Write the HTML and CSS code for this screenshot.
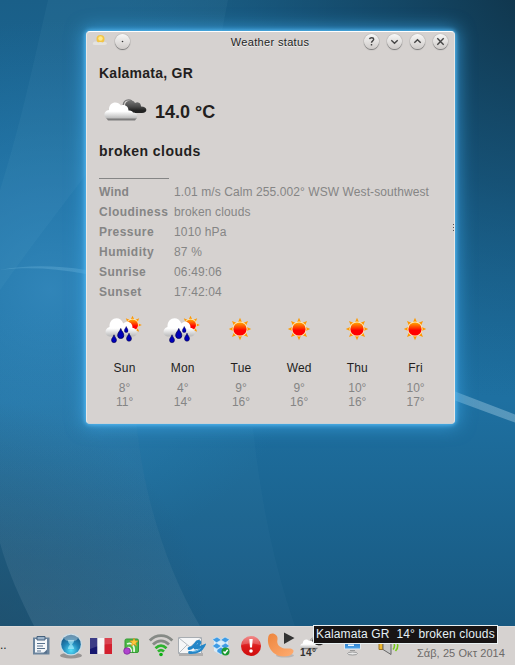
FILE: index.html
```html
<!DOCTYPE html>
<html lang="en">
<head>
<meta charset="utf-8">
<title>Weather status</title>
<link rel="stylesheet" href="styles.css">
</head>
<body>
<svg class="defs" width="0" height="0" aria-hidden="true">
  <defs>
    <linearGradient id="cloud" x1="0" y1="0" x2="0" y2="1"><stop offset=".55" stop-color="#fff"/><stop offset="1" stop-color="#b8b8b8"/></linearGradient>
    <linearGradient id="dark" x1="0" y1="0" x2="0" y2="1"><stop offset="0" stop-color="#777"/><stop offset=".5" stop-color="#484848"/><stop offset=".8" stop-color="#222"/></linearGradient>
    <linearGradient id="sunfill" x1="0" y1="0" x2="0" y2="1"><stop offset="0" stop-color="#ffa800"/><stop offset=".45" stop-color="#ff3000"/><stop offset=".6" stop-color="#ff0000"/></linearGradient>
    <radialGradient id="orb" cx=".5" cy=".8" r=".8"><stop offset="0" stop-color="#54e0fa"/><stop offset=".5" stop-color="#2186b8"/><stop offset="1" stop-color="#17517d"/></radialGradient>
    <linearGradient id="red" x1="0" y1="0" x2="0" y2="1"><stop offset="0" stop-color="#ee6a6a"/><stop offset=".5" stop-color="#dc1c1c"/><stop offset="1" stop-color="#cf0c0c"/></linearGradient>
    <linearGradient id="phone" x1="0" y1="0" x2="1" y2="1"><stop offset="0" stop-color="#ed853e"/><stop offset="1" stop-color="#ffad72"/></linearGradient>
    <linearGradient id="screen" x1="0" y1="0" x2="0" y2="1"><stop offset="0" stop-color="#175aa8"/><stop offset="1" stop-color="#4fa8f0"/></linearGradient>
    <symbol id="sun" viewBox="0 0 24 24">
      <path fill="#ff9800" d="M12 .8l2.200 5h-4.400zM12 23.200l2.200-5h-4.400zM.8 12l5-2.200v4.400zM23.200 12l-5-2.200v4.400zM4 4l5.500 2.300L6.300 9.500zM20 4l-5.500 2.300 3.200 3.200zM4 20l5.500-2.300-3.200-3.200zM20 20l-5.500-2.300 3.200-3.200z"/>
      <circle cx="12" cy="12" r="7.600" fill="#ffe9b8"/><circle cx="12" cy="12" r="6.600" fill="url(#sunfill)"/>
    </symbol>
    <symbol id="drop" viewBox="0 0 8 12"><path fill="#0000b8" stroke="#000050" stroke-width=".8" d="M4 .7C4.700 3.500 7.300 5 7.300 8a3.300 3.300 0 0 1-6.600 0C.7 5 3.300 3.500 4 .7z"/></symbol>
    <symbol id="rain" viewBox="0 0 38 32">
      <use href="#sun" x="17.500" y="0" width="20" height="20"/>
      <path fill="url(#cloud)" d="M6 21.500C-1 21.500-1 13.500 4.500 12 4 2 15.500.5 18.300 8.500c4-4 9.700-1 9.200 4.500 5.500 0 6.500 8.500 0 8.500z"/>
      <use href="#drop" x="6" y="19" width="6" height="9.500"/><use href="#drop" x="12" y="12.500" width="7.500" height="12"/><use href="#drop" x="19" y="11" width="4.500" height="7"/><use href="#drop" x="21" y="17.500" width="6" height="9.500"/>
    </symbol>
    <symbol id="clouds" viewBox="0 0 44 24">
      <path fill="none" stroke="#777" stroke-width="1.300" d="M19 9c0-8 6-8 9-6"/>
      <path fill="url(#dark)" d="M21 8c0-6 8-7 10-3 4-2 6 1 6 3.500 7 0 7 6.500 1 6.500H27C21 15 19 11 21 8z"/>
      <path fill="#666" opacity=".8" d="M2 19.800h31l-2 2.700H4z"/>
      <path fill="url(#cloud)" d="M4 20.500c-5 0-5-8 1-8.500C4.500 4.500 13 2 17 7.500c4-1.500 7.500 1 7.500 5 3-.3 4 1 4.500 2 4 0 5.500 3 3.500 6z"/>
    </symbol>
  </defs>
</svg>
<svg class="wallpaper" viewBox="0 0 515 665" preserveAspectRatio="none" aria-hidden="true">
  <defs>
    <linearGradient id="base" x1="0" y1="0" x2="0" y2="1"><stop offset="0" stop-color="#1a5f88"/><stop offset=".3" stop-color="#1c6b9c"/><stop offset=".6" stop-color="#1e70a1"/><stop offset=".95" stop-color="#18587f"/></linearGradient>
    <radialGradient id="glow" gradientUnits="userSpaceOnUse" cx="50" cy="290" r="270"><stop offset="0" stop-color="#3489bd" stop-opacity=".85"/><stop offset="1" stop-color="#247cb0" stop-opacity="0"/></radialGradient>
    <radialGradient id="shade" gradientUnits="userSpaceOnUse" cx="540" cy="-20" r="420"><stop offset="0" stop-color="#0f3247"/><stop offset=".5" stop-color="#134563" stop-opacity=".65"/><stop offset="1" stop-color="#175679" stop-opacity="0"/></radialGradient>
    <radialGradient id="corner" gradientUnits="userSpaceOnUse" cx="-30" cy="640" r="240"><stop offset="0" stop-color="#234d66" stop-opacity=".7"/><stop offset="1" stop-color="#234d66" stop-opacity="0"/></radialGradient>
    <linearGradient id="veil" x1="0" y1="0" x2="0" y2="1"><stop offset=".1" stop-color="#7fa5bd" stop-opacity="0"/><stop offset="1" stop-color="#7fa5bd" stop-opacity=".18"/></linearGradient>
    <linearGradient id="wave" x1="0" y1="0" x2="1" y2="0"><stop offset="0" stop-color="#8fd0f0" stop-opacity=".2"/><stop offset="1" stop-color="#a8cfe4" stop-opacity=".42"/></linearGradient>
  </defs>
  <rect width="515" height="665" fill="url(#base)"/>
  <rect width="515" height="665" fill="url(#glow)"/>
  <rect width="515" height="665" fill="url(#shade)"/>
  <rect width="515" height="665" fill="url(#corner)"/>
  <path fill="#a5d5ee" opacity=".05" d="M48 0h135C140 120 70 190 0 290V190C22 120 34 60 48 0zM183 0h45l-6 31h-53z"/>
  <path fill="url(#veil)" d="M0 270h90c20 50 38 100 47 158 8 75 32 145 63 198H34C20 598 8 572 0 543z"/>
  <path fill="#8dc5e0" opacity=".035" d="M137 428h116c8 75 22 140 42 198h-95c-31-53-55-123-63-198z"/>
  <path fill="url(#wave)" d="M0 270C25 265 55 265 86 270c130 22 250 75 369 121.500l60 23v8l-60-22C330 354 215 290 86 274 55 268 25 267 0 270z"/>
</svg>

<main class="window">
  <header class="titlebar">
    <div class="title-left">
      <svg class="appicon" viewBox="0 0 16 14"><circle cx="8.500" cy="5" r="4" fill="#f3c545"/><circle cx="8.500" cy="4.500" r="2.200" fill="#ffe98a"/><path fill="#e6e4e1" opacity=".9" d="M1 9c1-2.500 4-1.500 5-.5 3-1 4 0 5 0 2-1 4 0 4 1 0 1.500-3 1.500-5 1.500H3C1 11 0 10 1 9z"/></svg>
      <span class="btn"><svg viewBox="0 0 15 15"><circle class="dot" cx="7.500" cy="7.500" r=".8"/></svg></span>
    </div>
    <h1>Weather status</h1>
    <div class="title-right">
      <span class="btn"><svg viewBox="0 0 15 15"><path d="M5.500 5.200c.5-2 4.200-2 4.200.1 0 1.600-2.200 1.600-2.200 3.400M7.500 10v1.400"/></svg></span>
      <span class="btn"><svg viewBox="0 0 15 15"><path d="M4.300 6.300l3.200 3 3.200-3"/></svg></span>
      <span class="btn"><svg viewBox="0 0 15 15"><path d="M4.300 8.800l3.200-3 3.200 3"/></svg></span>
      <span class="btn"><svg viewBox="0 0 15 15"><path d="M4.300 4.300l6.400 6.400M10.700 4.300l-6.400 6.400"/></svg></span>
    </div>
  </header>
  <section class="current">
    <h2 class="city">Kalamata, GR</h2>
    <div class="now"><svg><use href="#clouds"/></svg><strong>14.0 °C</strong></div>
    <h2 class="summary">broken clouds</h2>
    <div class="rule"></div>
  </section>
  <dl class="details">
    <dt class="wide">Wind</dt><dd class="wind">1.01 m/s Calm 255.002° WSW West-southwest</dd>
    <dt>Cloudiness</dt><dd>broken clouds</dd>
    <dt>Pressure</dt><dd>1010 hPa</dd>
    <dt>Humidity</dt><dd>87 %</dd>
    <dt>Sunrise</dt><dd>06:49:06</dd>
    <dt>Sunset</dt><dd>17:42:04</dd>
  </dl>
  <section class="forecast">
    <div class="day"><svg class="rain"><use href="#rain"/></svg><b>Sun</b><span>8°</span><span>11°</span></div>
    <div class="day"><svg class="rain"><use href="#rain"/></svg><b>Mon</b><span>4°</span><span>14°</span></div>
    <div class="day"><svg><use href="#sun"/></svg><b>Tue</b><span>9°</span><span>16°</span></div>
    <div class="day"><svg><use href="#sun"/></svg><b>Wed</b><span>9°</span><span>16°</span></div>
    <div class="day"><svg><use href="#sun"/></svg><b>Thu</b><span>10°</span><span>16°</span></div>
    <div class="day"><svg><use href="#sun"/></svg><b>Fri</b><span>10°</span><span>17°</span></div>
  </section>
  <i class="grip"></i>
</main>

<footer class="panel">
  <span class="more">..</span>
  <div class="tray">
    <svg viewBox="0 0 30 39"><path fill="#6b849d" d="M7 11.500h16.500v17H7z"/><path fill="#f4f7fa" d="M9 13h12v13.500H9z"/><path fill="#9eb4ca" d="M11 10.500h8v3.500h-8z" stroke="#46617c"/><path stroke="#58728e" stroke-width="1.200" d="M11 17.500h8M11 20h6M11 22.500h8M11 25h4"/><path fill="#56708c" d="M17 27.500l4-4v4z"/></svg>
    <svg viewBox="0 0 30 39"><ellipse cx="15" cy="29.500" rx="11" ry="3" fill="#555" opacity=".5"/><circle cx="15" cy="18.500" r="11" fill="#c9dce6"/><circle cx="15" cy="18.500" r="9.800" fill="url(#orb)"/><path fill="#b4f3ff" opacity=".6" d="M12 14h6c0 3-1 3-2 4.500 1 1.500 2 2 2 4.500h-6c0-2.500 1-3 2-4.500-1-1.500-2-1.500-2-4.500z"/><ellipse cx="15" cy="12" rx="7" ry="3.500" fill="#fff" opacity=".35"/></svg>
    <svg viewBox="0 0 30 39"><path fill="#17176f" d="M4 12h7.500v16H4z"/><path fill="#f4f4f4" d="M11.500 12h7v16h-7z"/><path fill="#d3202f" d="M18.500 12H26v16h-7.500z"/><path fill="#fff" opacity=".16" d="M4 12h22v6c-8 0-15 2-22 5z"/></svg>
    <svg viewBox="0 0 30 39"><rect x="9" y="13" width="13.500" height="13.500" rx="1.500" fill="#4cb848" stroke="#339a32"/><path fill="none" stroke="#e4fadf" stroke-width="1.700" d="M11 18c5-2 8 2 7 8M11 22c3-1 5 1 4 4"/><path fill="#ffc83c" stroke="#d78a20" stroke-width=".6" d="M18 12l1.200 2.800 3 .2-2.400 2 .8 3-2.600-1.700-2.600 1.700.8-3-2.400-2 3-.2z"/><circle cx="11" cy="25" r="3.300" fill="#b044ce" stroke="#782294" stroke-width=".7"/></svg>
    <svg viewBox="0 0 30 39"><g fill="none" stroke-width="2.800"><path stroke="#868a86" d="M3.800 14.500c6.500-6.500 16-6.500 22.500 0M7 18.500c5-4.800 11-4.800 16 0"/><path stroke="#2eb32e" d="M9.500 22.200c4-3.500 7-3.500 11 0M12 25.500c2-1.800 4-1.800 6 0"/></g><circle cx="15" cy="28.500" r="1.800" fill="#0cae12"/></svg>
    <svg viewBox="0 0 30 39"><path fill="#777" opacity=".4" d="M3 27h24v3H3z"/><path fill="#f5f6f7" stroke="#a8adb2" d="M2.500 11.500h23v16h-23z"/><path fill="none" stroke="#b6bcc2" d="M3 12l11 9 11-9M3 27l8-8"/><path fill="none" stroke="#2386c8" stroke-width="2.800" stroke-linecap="round" d="M13 22.500c4-.5 5-2.500 7-5.500 1.500-2.500 5-2 3.500.5-1 2-3 3-4 4M19 22c3 0 6-1 8.500-2-2 4-6 7-14 6.500"/><path fill="none" stroke="#87cdf5" stroke-width=".8" d="M16 25.500c4 0 6-1 8.500-3"/></svg>
    <svg viewBox="0 0 30 39"><path fill="#d9edfa" d="M8 15h14v10l-7 4-7-4z"/><g fill="#3f9be4" stroke="#d9edfa" stroke-width=".6"><path d="M11 11l4.300 2.900-4.800 2.900-4.200-3.200zM19 11l-4.300 2.900 4.800 2.900 4.200-3.200zM10.500 17l4.800 3-4.300 3-4.700-3zM19.500 17l-4.800 3 4.300 3 4.700-3zM15 21l4 2.700v2.200l-4 2.500-4-2.500v-2.200z"/></g><circle cx="19.500" cy="25.500" r="4" fill="#1b9a32"/><path fill="none" stroke="#fff" stroke-width="1.500" d="M17.500 25.500l1.500 1.700 2.700-3.400"/></svg>
    <svg viewBox="0 0 30 39"><circle cx="15" cy="20" r="10" fill="url(#red)"/><path fill="#fff" opacity=".2" d="M6 19c0-12 18-12 18 0-5-2-13-2-18 0z"/><path fill="#fff" d="M13.300 13h3.400l-.7 8.500h-2z"/><circle cx="15" cy="25" r="1.800" fill="#fff"/></svg>
    <svg viewBox="0 0 30 39"><ellipse cx="19" cy="29.500" rx="9" ry="2" fill="#777" opacity=".3"/><path fill="url(#phone)" d="M2.500 10C0 19 6 30.500 18 30.500c6 0 10-3 9.500-6-2-3.500-7.500-1-11-2.500-4-1.500-6-4.500-5-8.500C12.500 8.500 5 5 2.500 10z"/><path fill="#333" d="M18 6.500L28.500 12 18 18z"/></svg>
    <span class="weather"><svg viewBox="0 0 44 24"><use href="#clouds"/></svg><b>14°</b></span>
    <svg class="monitor" viewBox="0 0 30 39"><path fill="url(#screen)" stroke="#dde6ee" d="M7.500 12.500h16v10.500h-16z"/><path fill="#eef7ff" d="M11 18.500h6V20h-6zM16 16.500h5V18h-5z"/><ellipse cx="15.500" cy="27.500" rx="5" ry="1.500" fill="#e8e8e8" stroke="#999"/><path fill="#999" d="M13 24h5v1h-5z"/></svg>
    <svg class="volume" viewBox="0 0 30 39"><path fill="#edb72e" stroke="#9c7420" d="M7 15.500h4v8H7z"/><path fill="#c8c8c8" stroke="#666" d="M11 15.500l8-6v19l-8-5z"/><path fill="none" stroke="#78c91c" stroke-width="1.600" d="M21 23.500c2-2 2-6 0-8M23.500 25c3-3 3-8 0-11"/></svg>
  </div>
  <time>Σάβ, 25 Οκτ 2014</time>
  <div class="tooltip">Kalamata GR&nbsp; 14° broken clouds</div>
</footer>
</body>
</html>
```
FILE: styles.css
```css
* { box-sizing: border-box; }
body {
  margin: 0;
  width: 515px;
  height: 665px;
  overflow: hidden;
  display: flex;
  flex-direction: column;
  justify-content: space-between;
  font: 12px/20px "Liberation Sans", sans-serif;
  color: #231f1e;
  background: #1c658f;
}
h1, h2, dl, dd { margin: 0; }
svg { display: block; flex: none; }
.defs { position: absolute; }
.wallpaper { position: absolute; inset: 0; width: 515px; height: 665px; z-index: -1; }

.window {
  position: relative;
  width: 369px;
  height: 393px;
  margin: 31px 0 0 86px;
  background: #d6d2d0;
  border: 1px solid #e9e8e7;
  border-top-color: #fff;
  border-bottom-color: #c9d1d6;
  border-radius: 4px;
  box-shadow: 0 0 4px 1px #55b9f2, 0 0 17px 3px rgba(60, 165, 228, .75);
}
.titlebar { display: grid; grid-template-columns: 1fr auto 1fr; height: 21px; align-items: center; padding: 0 6px 0 5px; }
.titlebar h1 { font-size: 11px; font-weight: 400; line-height: 20px; margin-top: -2px; letter-spacing: .35px; text-shadow: 0 1px #eee; }
.title-left, .title-right { display: flex; align-items: center; margin-top: -2px; }
.title-left { gap: 7px; }
.title-right { justify-content: flex-end; gap: 8px; }
.appicon { width: 16px; height: 14px; margin-top: -1px; }
.btn { width: 15px; height: 15px; border-radius: 50%; background: linear-gradient(#f7f7f6, #cfcbc9); box-shadow: 0 1px 1px #777, 0 0 1px #777; }
.btn svg { width: 15px; height: 15px; fill: none; stroke: #444; stroke-width: 1.4; }
.btn .dot { fill: #333; stroke: none; }

.current { padding: 10px 12px 0; }
.current h2 { font-size: 14px; line-height: 20px; }
.city { letter-spacing: .25px; }
.summary { letter-spacing: .46px; }
.now { display: flex; align-items: center; gap: 7px; height: 58px; padding-left: 5px; }
.now svg { width: 44px; height: 24px; margin-bottom: 4px; }
.now strong { font-size: 18px; }
.rule { width: 70px; height: 1px; margin-top: 17px; background: #858585; }

.details { display: grid; grid-template-columns: 75px 1fr; grid-auto-rows: 20px; padding: 3px 0 0 12px; color: #858585; white-space: nowrap; }
.details dt { font-weight: 700; letter-spacing: .46px; }
.details .wide { letter-spacing: .2px; }
.details dd { letter-spacing: .15px; }
.details .wind { letter-spacing: .09px; }

.forecast { display: grid; grid-template-columns: repeat(6, 58.2px); padding: 13px 0 0 8px; }
.day { display: flex; flex-direction: column; align-items: center; color: #858585; line-height: 14px; }
.day svg { width: 24px; height: 24px; margin: 2px 0 17px; }
.day svg.rain { width: 38px; height: 32px; margin: 0 0 11px; }
.day b { font-weight: 400; color: #231f1e; line-height: 20px; margin-bottom: 3px; letter-spacing: .2px; }
.day b, .day span { padding-left: 1px; }
.grip { position: absolute; right: 0; top: 192px; width: 1px; height: 7px; background: repeating-linear-gradient(#555 0 1px, transparent 1px 3px); }

.panel { position: relative; display: flex; height: 39px; background: #d6d2d0; border-top: 1px solid #dedbd9; }
.more { width: 26px; padding-top: 8px; }
.tray { display: flex; margin-top: -1px; }
.tray > svg { width: 30px; height: 39px; }
.weather { width: 30px; padding: 11px 0 0 4px; }
.weather svg { width: 24px; height: 13px; }
.weather b { display: block; font-size: 10px; line-height: 10px; margin-top: -2px; color: #333; letter-spacing: .5px; }
.tray > .monitor { margin-left: 11px; }
.tray > .volume { margin-left: 5px; }
.panel time { margin: 16px 10px 0 auto; font-size: 11px; line-height: 20px; color: #6d6a69; white-space: nowrap; letter-spacing: .08px; }
.tooltip { position: absolute; left: 313px; top: -2px; width: 185px; height: 19px; border: 1px solid #e8f0f2; background: #181414; color: #e4f0f4; line-height: 17px; padding-left: 2px; white-space: nowrap; letter-spacing: .13px; }
```
